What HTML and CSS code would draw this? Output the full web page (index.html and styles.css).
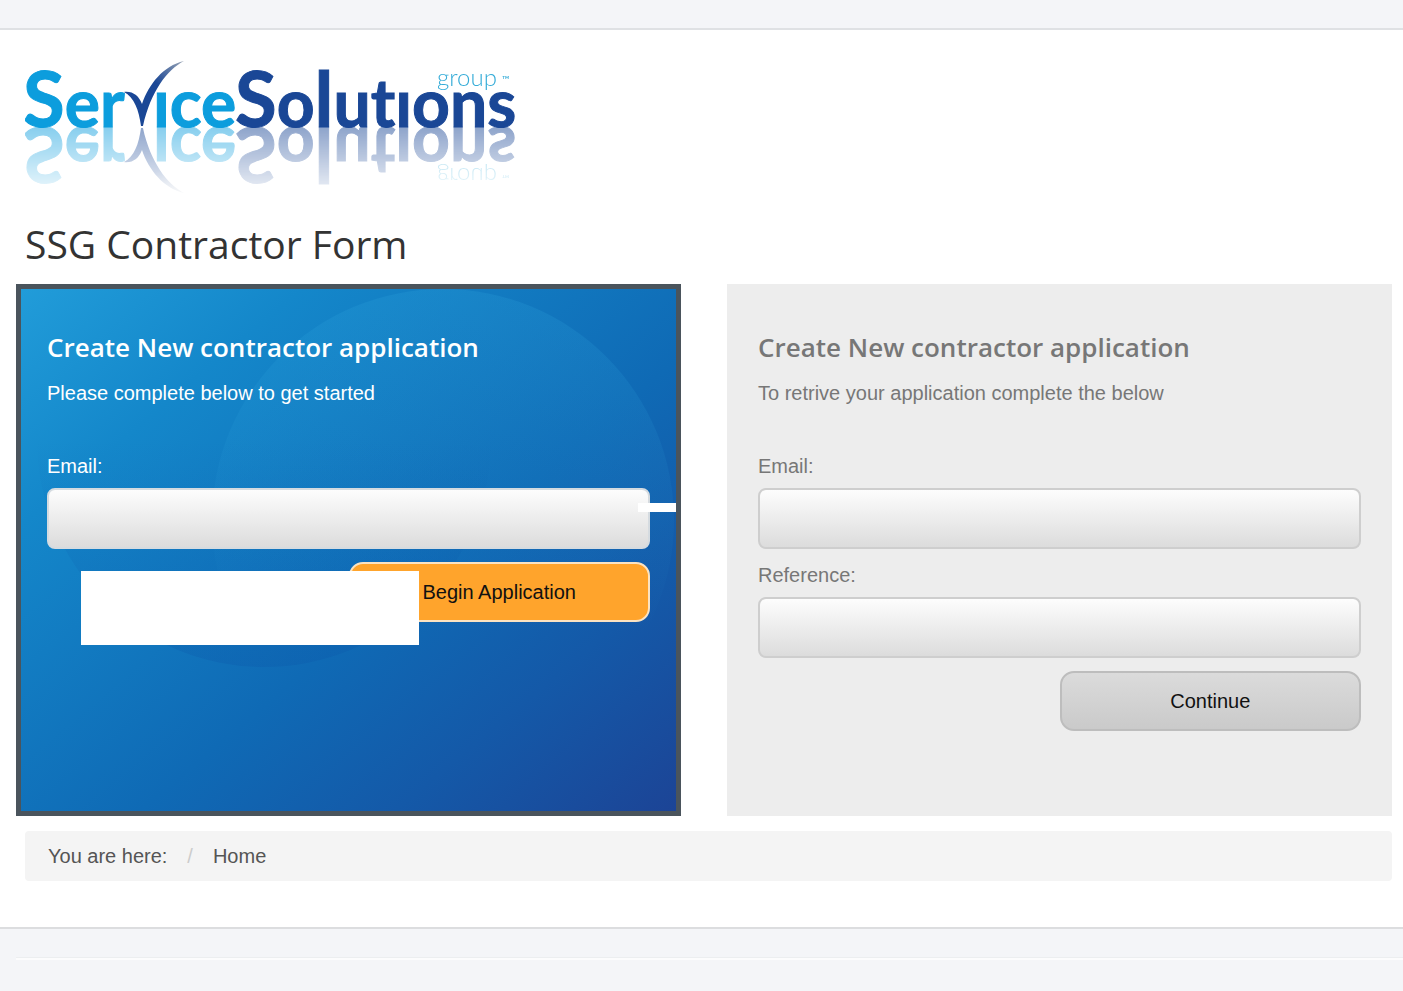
FILE: index.html
```
<!DOCTYPE html>
<html lang="en">
  <head>
    <meta charset="utf-8" />
    <meta name="viewport" content="width=device-width, initial-scale=1" />
    <title>SSG Contractor Form</title>
    <link rel="stylesheet" href="styles.css">
  </head>
  <body>
    <main class="page">
      <header class="header">
        <a href="#" class="logo" aria-label="Service Solutions group">
          <svg width="500" height="70" viewBox="0 0 500 70">
            <defs>
              <linearGradient id="tick" x1="0" y1="1" x2="1" y2="0">
                <stop offset="0.6" stop-color="#1a4796" />
                <stop offset="1" stop-color="#9aa5b5" />
              </linearGradient>
            </defs>
            <g class="logo-word">
              <text class="logo-light" x="-2" y="69"><tspan class="logo-cap">S</tspan>er</text>
              <text class="logo-light" x="128" y="69">ıce</text>
              <text class="logo-dark" x="210" y="69"><tspan class="logo-cap">S</tspan>o<tspan class="logo-cap">l</tspan>utıons</text>
            </g>
            <path fill="url(#tick)" d="M99 34C108 33 114 38 117 46C124 26 138 8 159 3C142 12 126 33 118 68H116C114 52 109 39 99 34Z" />
            <text class="logo-group" x="412" y="28">group</text>
            <text class="logo-tm" x="477" y="25">™</text>
          </svg>
        </a>
        <h1 class="title">SSG Contractor Form</h1>
      </header>

      <div class="panels">
        <form class="panel panel-new">
          <h2 class="panel-title">Create New contractor application</h2>
          <p class="panel-text">Please complete below to get started</p>
          <label class="label" for="new-email">Email:</label>
          <input class="field" type="email" id="new-email" />
          <button class="btn btn-begin" type="button">Begin Application</button>
          <span class="patch patch-large"></span>
          <span class="patch patch-small"></span>
        </form>

        <form class="panel panel-saved">
          <h2 class="panel-title">Create New contractor application</h2>
          <p class="panel-text">To retrive your application complete the below</p>
          <label class="label" for="saved-email">Email:</label>
          <input class="field" type="email" id="saved-email" />
          <label class="label" for="saved-ref">Reference:</label>
          <input class="field" type="text" id="saved-ref" />
          <button class="btn btn-continue" type="button">Continue</button>
        </form>
      </div>

      <nav class="breadcrumb">
        <span>You are here:</span>
        <span class="divider">/</span>
        <a href="#">Home</a>
      </nav>
    </main>
    <footer class="footer"></footer>
  </body>
</html>
```
FILE: styles.css
```
* {
  box-sizing: border-box;
}
body {
  margin: 0;
  padding-top: 28px;
  background: #f4f5f8;
  color: #555;
  font-family: "Liberation Sans", Arial, sans-serif;
  font-size: 20px;
  line-height: 28px;
}
.page {
  padding: 28px 11px 46px 16px;
  background: #fff;
  border-top: 2px solid #dfe1e4;
  border-bottom: 2px solid #dcdddf;
}
.header {
  padding-left: 9px;
}

/* logo */
.logo {
  display: block;
  height: 156px;
}
.logo svg {
  display: block;
  overflow: hidden;
  -webkit-box-reflect: below -2px linear-gradient(to top, rgba(0, 0, 0, 0.5), rgba(0, 0, 0, 0.06));
}
.logo-word {
  font-family: Lato, sans-serif;
  font-size: 66px;
  font-weight: 700;
  font-variant-ligatures: none;
  stroke-width: 1px;
}
.logo-cap {
  font-size: 76px;
}
.logo-light {
  fill: #0c9ddd;
  stroke: #0c9ddd;
}
.logo-dark {
  fill: #1a4796;
  stroke: #1a4796;
}
.logo-group {
  font-family: Lato, sans-serif;
  font-size: 24px;
  font-weight: 300;
  fill: #35acd8;
}
.logo-tm {
  font-family: Lato, sans-serif;
  font-size: 10px;
  fill: #35acd8;
}

.title {
  margin: 0;
  padding-bottom: 10px;
  color: #333;
  font-family: "Open Sans", sans-serif;
  font-size: 39px;
  font-weight: 500;
  line-height: 60px;
}

/* panels */
.panels {
  display: grid;
  grid-template-columns: 1fr 1fr;
  gap: 46px;
}
.panel {
  position: relative;
  z-index: 0;
  display: flex;
  flex-direction: column;
  min-height: 532px;
  padding: 40px 26px;
  border: 5px solid #ededed;
}
.panel-new {
  color: #fff;
  border-color: #4a545c;
  background: linear-gradient(140deg, #219cd9 0%, #1487ca 22%, #0f6ab5 58%, #1459a8 78%, #1c4496 100%);
}
/* faint discs behind the form */
.panel-new::before,
.panel-new::after {
  content: "";
  position: absolute;
  z-index: -1;
  border-radius: 50%;
}
.panel-new::before {
  top: 0;
  right: 2px;
  width: 462px;
  height: 462px;
  background: linear-gradient(rgba(50, 170, 225, 0.2), rgba(50, 170, 225, 0) 75%);
}
.panel-new::after {
  top: 0;
  left: 16px;
  width: 454px;
  height: 378px;
  border-radius: 0 0 227px 227px;
  background: linear-gradient(rgba(10, 80, 165, 0) 40%, rgba(10, 80, 165, 0.22));
}
.panel-saved {
  color: #777;
  background: #ededed;
}
.panel-title {
  margin: 0;
  font-family: "Open Sans", sans-serif;
  font-size: 26px;
  font-weight: 600;
  line-height: 36px;
}
.panel-text {
  margin: 14px 0 46px;
}
.label {
  line-height: 27px;
  margin-bottom: 8px;
}
.field {
  width: 100%;
  height: 61px;
  margin-bottom: 13px;
  padding: 0 16px;
  border: 2px solid #cecece;
  border-radius: 8px;
  background: linear-gradient(#fdfdfd, #dcdcdc);
  font: inherit;
}
.panel-new .field {
  border-color: #d5dbe0;
}
.btn {
  align-self: flex-end;
  width: 50%;
  height: 60px;
  border-radius: 14px;
  color: #111;
  font: inherit;
}
.btn-begin {
  border: 2px solid #fbe3c2;
  background: #ffa42c;
}
.btn-continue {
  border: 2px solid #bdbdbd;
  background: linear-gradient(#dbdbdb, #cacaca);
}

/* blank patches lying over the panel */
.patch {
  position: absolute;
  background: #fff;
}
.patch-large {
  top: 282px;
  left: 60px;
  width: 338px;
  height: 74px;
}
.patch-small {
  top: 214px;
  right: 0;
  width: 38px;
  height: 9px;
}

.breadcrumb {
  display: flex;
  gap: 20px;
  margin: 15px 0 0 9px;
  padding: 11px 23px;
  border-radius: 4px;
  background: #f4f4f4;
}
.breadcrumb a {
  color: #555;
  text-decoration: none;
}
.divider {
  color: #ccc;
}
.footer {
  margin: 28px 0 0 16px;
  border-top: 1px solid #eceef0;
  border-bottom: 2px solid #fcfcfd;
}
```
